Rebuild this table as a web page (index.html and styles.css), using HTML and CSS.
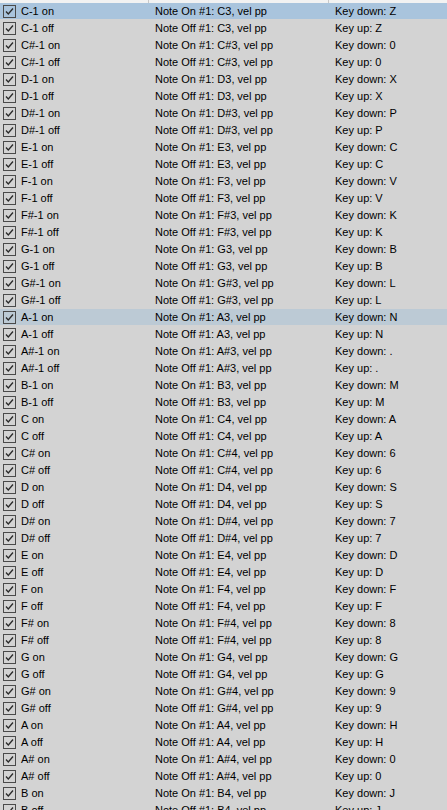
FILE: index.html
```html
<!DOCTYPE html>
<html lang="en">
<head>
    <meta charset="UTF-8">
    <title>Key mapping</title>
    <link rel="stylesheet" href="styles.css">
</head>
<body>
    <div class="header">
        <span class="sep sep-1"></span>
        <span class="sep sep-2"></span>
    </div>
    <div class="list" id="list"></div>
    <script>
        var names = ['C', 'C#', 'D', 'D#', 'E', 'F', 'F#', 'G', 'G#', 'A', 'A#', 'B'];
        var keysLow = ['Z', '0', 'X', 'P', 'C', 'V', 'K', 'B', 'L', 'N', '.', 'M'];
        var keysMid = ['A', '6', 'S', '7', 'D', 'F', '8', 'G', '9', 'H', '0', 'J'];
        var list = document.getElementById('list');
        var check = '<svg class="check" width="13" height="13" viewBox="0 0 13 13">' +
            '<rect x="0.5" y="0.5" width="12" height="12" fill="none" stroke="#4a4a4a"/>' +
            '<path d="M3 6.5 L5.3 9 L10 3.5" fill="none" stroke="#2a2a2a" stroke-width="1.3"/></svg>';

        function addRow(label, event, key, cls) {
            var row = document.createElement('div');
            row.className = 'row' + (cls ? ' ' + cls : '');
            row.innerHTML = '<div class="col name">' + check + '<span>' + label + '</span></div>' +
                '<div class="col event">' + event + '</div>' +
                '<div class="col key">' + key + '</div>';
            list.appendChild(row);
        }

        [[-1, 3, keysLow], [0, 4, keysMid]].forEach(function (oct) {
            names.forEach(function (n, i) {
                var label = oct[0] === -1 ? n + '-1' : n;
                var note = n + oct[1];
                var onCls = '';
                if (oct[0] === -1 && i === 0) onCls = 'selected';
                if (oct[0] === -1 && n === 'A') onCls = 'hover';
                addRow(label + ' on', 'Note On #1: ' + note + ', vel pp', 'Key down: ' + oct[2][i], onCls);
                addRow(label + ' off', 'Note Off #1: ' + note + ', vel pp', 'Key up: ' + oct[2][i]);
            });
        });
    </script>
</body>
</html>
```

FILE: styles.css
```css
html, body {
    margin: 0;
    padding: 0;
}
body {
    background: #d3d3d3;
    color: #000;
    font-family: 'Liberation Sans', Arial, sans-serif;
    font-size: 11px;
    width: 447px;
    height: 810px;
    overflow: hidden;
}
.header {
    position: relative;
    height: 3px;
    background: #f2f2f2;
}
.sep {
    position: absolute;
    top: 0;
    width: 1px;
    height: 3px;
    background: #c8c8c8;
}
.sep-1 {
    left: 148px;
}
.sep-2 {
    left: 328px;
}
.row {
    display: flex;
    height: 16px;
    margin-bottom: 1px;
    align-items: center;
    white-space: nowrap;
}
.row.selected {
    background: #a9c4dd;
}
.row.hover {
    background: #bccad5;
}
.col {
    display: flex;
    align-items: center;
}
.name {
    width: 148px;
    padding-left: 3px;
    box-sizing: border-box;
}
.check {
    display: block;
    margin-right: 5px;
    flex-shrink: 0;
}
.event {
    width: 180px;
    padding-left: 7px;
    box-sizing: border-box;
}
.key {
    padding-left: 7px;
}
```
